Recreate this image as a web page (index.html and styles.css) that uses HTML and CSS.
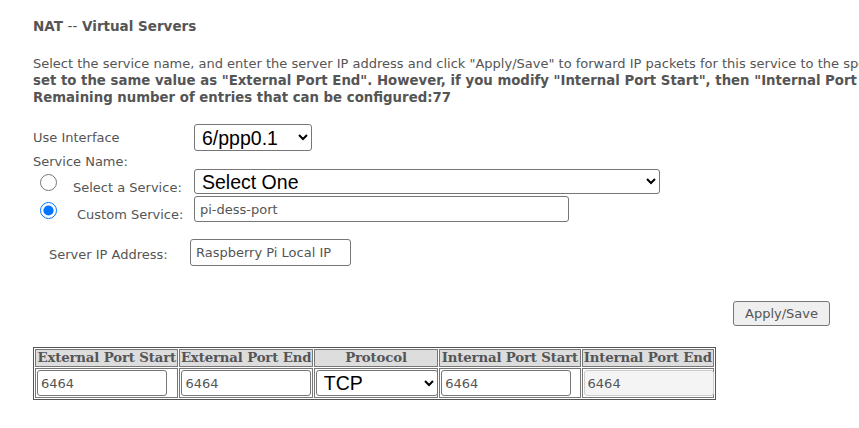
FILE: index.html
```html
<!DOCTYPE html>
<html>
<head>
<meta charset="utf-8">
<link rel="stylesheet" href="styles.css">
</head>
<body>
<div class="page">
  <div class="title">NAT <span class="dash">--</span> Virtual Servers</div>
  <div class="intro">
    <div>Select the service name, and enter the server IP address and click "Apply/Save" to forward IP packets for this service to the specified server.</div>
    <div class="strong">set to the same value as "External Port End". However, if you modify "Internal Port Start", then "Internal Port End" will be set to the same value.</div>
    <div class="strong">Remaining number of entries that can be configured:77</div>
  </div>

  <div class="form">
    <div class="row iface">
      <span class="lbl">Use Interface</span>
      <select class="sel sel-iface"><option>6/ppp0.1</option></select>
    </div>
    <div class="row svcname">Service Name:</div>
    <div class="row radio-row r1">
      <input type="radio" name="svc" class="radio">
      <span class="rlbl">Select a Service:</span>
      <select class="sel sel-svc"><option>Select One</option></select>
    </div>
    <div class="row radio-row r2">
      <input type="radio" name="svc" class="radio" checked>
      <span class="rlbl rlbl2">Custom Service:</span>
      <input type="text" class="txt txt-custom" value="pi-dess-port">
    </div>
    <div class="row ip">
      <span class="iplbl">Server IP Address:</span>
      <input type="text" class="txt txt-ip" value="Raspberry Pi Local IP">
    </div>
  </div>

  <div class="actions">
    <button class="btn">Apply/Save</button>
  </div>

  <table class="ports">
    <tr>
      <th class="c1">External Port Start</th>
      <th class="c2">External Port End</th>
      <th class="c3">Protocol</th>
      <th class="c4">Internal Port Start</th>
      <th class="c5">Internal Port End</th>
    </tr>
    <tr>
      <td><input type="text" class="cell" value="6464"></td>
      <td><input type="text" class="cell" value="6464"></td>
      <td><select class="sel sel-proto"><option>TCP</option></select></td>
      <td><input type="text" class="cell" value="6464"></td>
      <td><input type="text" class="cell disabled" value="6464" disabled></td>
    </tr>
  </table>
</div>
</body>
</html>
```
FILE: styles.css
```css
html, body {
  margin: 0;
  padding: 0;
  background: #fff;
}
body {
  font-family: "DejaVu Sans", Verdana, sans-serif;
  font-size: 13px;
  color: #555;
}
.page {
  padding: 17px 0 0 33px;
  width: 1500px;
}
.title {
  font-weight: bold;
  font-size: 13.5px;
  line-height: 18px;
}
.title .dash {
  font-weight: normal;
}
.intro {
  margin-top: 20px;
  line-height: 17px;
  white-space: nowrap;
}
.intro .strong {
  font-weight: bold;
  font-size: 13.3px;
}
.form {
  margin-top: 18px;
}
.row {
  display: flex;
  align-items: center;
}
.lbl {
  width: 161px;
}
.iface {
  height: 27px;
}
.svcname {
  height: 16px;
  padding-top: 2px;
  margin-bottom: -2px;
}
.sel {
  font-family: "Liberation Sans", Arial, sans-serif;
  font-size: 19.5px;
  color: #000;
  border: 1px solid #767676;
  border-radius: 3px;
  background: #fff;
  box-sizing: border-box;
  padding-left: 3px;
}
.sel-iface {
  width: 118px;
  height: 27px;
}
.radio-row {
  height: 28px;
  align-items: flex-start;
}
.radio {
  width: 17px;
  height: 17px;
  margin: 7px 0 0 7px;
  accent-color: #0075ff;
}
.rlbl {
  margin-left: 16px;
  width: 121px;
  margin-top: 13px;
  line-height: 16px;
}
.rlbl2 {
  margin-left: 20px;
  width: 117px;
  margin-top: 12px;
}
.sel-svc {
  width: 466px;
  height: 25px;
  margin-top: 2px;
}
.txt {
  font-family: "DejaVu Sans", Verdana, sans-serif;
  font-size: 13px;
  color: #555;
  border: 1px solid #767676;
  border-radius: 3px;
  box-sizing: border-box;
  padding: 0 5px;
}
.txt-custom {
  width: 375px;
  height: 26px;
  margin-top: 1px;
}
.ip {
  margin-top: 16px;
  height: 27px;
}
.iplbl {
  margin-left: 16px;
  width: 141px;
  padding-top: 4px;
}
.txt-ip {
  width: 161px;
  height: 27px;
}
.actions {
  width: 797px;
  display: flex;
  justify-content: flex-end;
  margin-top: 35px;
}
.btn {
  font-family: "DejaVu Sans", Verdana, sans-serif;
  font-size: 13px;
  color: #555;
  width: 97px;
  height: 25px;
  border: 1px solid #767676;
  border-radius: 3px;
  background: #efefef;
  padding: 0;
}
.ports {
  margin-top: 21px;
  border: 1px solid #555;
  border-spacing: 1px;
  border-collapse: separate;
  table-layout: fixed;
  width: 683px;
}
.ports th {
  font-family: "DejaVu Serif", "Liberation Serif", serif;
  font-weight: bold;
  font-size: 13.3px;
  line-height: 16px;
  color: #555;
  background: #ddd;
  border: 1px solid #777;
  padding: 0;
  height: 16px;
  white-space: nowrap;
  overflow: hidden;
  letter-spacing: -0.15px;
}
.ports td {
  border: 1px solid #777;
  padding: 1px;
}
.ports .c1 { width: 141px; }
.ports .c2 { width: 131px; }
.ports .c3 { width: 122px; }
.ports .c4 { width: 139px; }
.ports .c5 { width: 130px; }
.cell {
  font-family: "DejaVu Sans", Verdana, sans-serif;
  font-size: 13px;
  color: #555;
  border: 1px solid #767676;
  border-radius: 3px;
  box-sizing: border-box;
  width: 130px;
  height: 26px;
  padding: 0 3px;
  background: #fff;
  display: block;
}
.cell.disabled {
  background: #f4f4f4;
  border-color: #ccc;
}
.sel-proto {
  width: 122px;
  height: 26px;
  display: block;
}
```
